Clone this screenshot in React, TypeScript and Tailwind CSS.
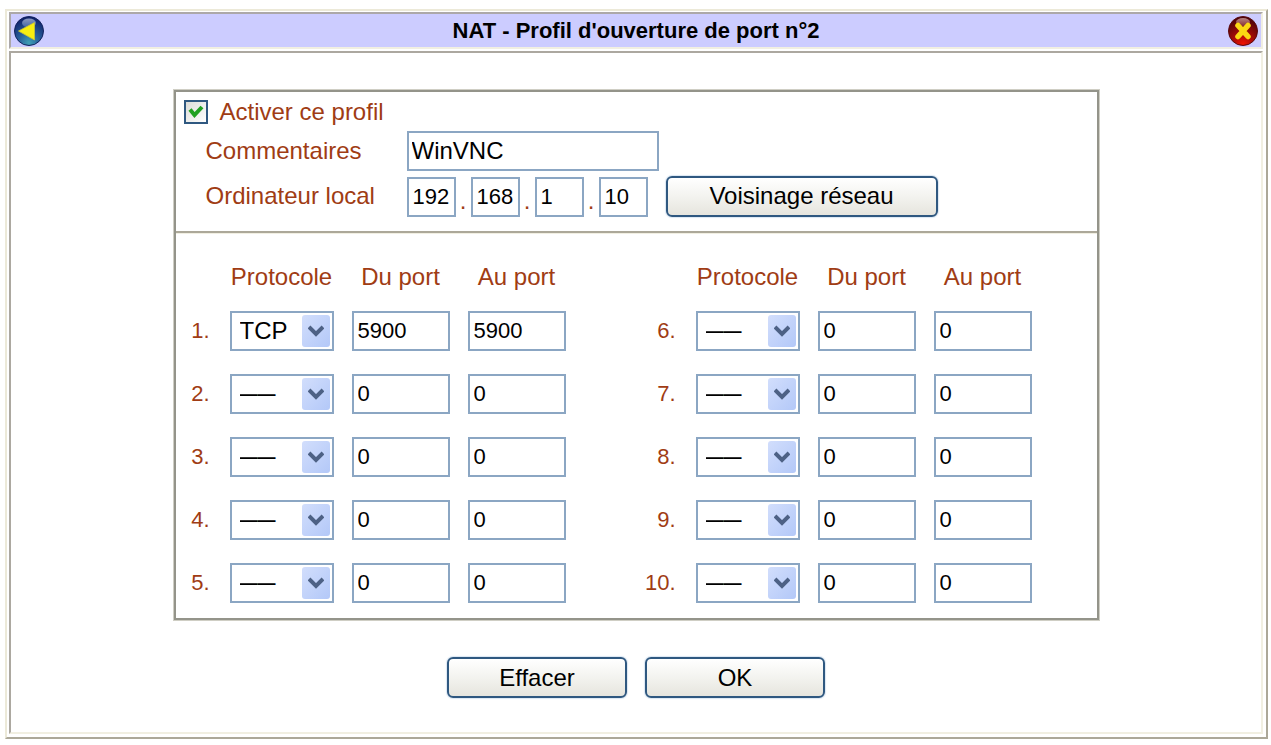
import React, { useState } from "react";

const rules = Array.from({ length: 10 }, (_, index) => ({
  id: index + 1,
  protocol: index === 0 ? "tcp" : "none",
  from: index === 0 ? "5900" : "0",
  to: index === 0 ? "5900" : "0",
}));

const localAddress = ["192", "168", "1", "10"];

const inputClass =
  "block h-[40px] border-2 border-[#8ba6c3] bg-white px-[4px] text-[22px] text-black outline-none";

const buttonClass =
  "h-[41px] rounded-[6px] border-2 border-[#2f5880] bg-linear-to-b from-white via-[#f3f3ef] to-[#e6e5de] text-[24px] leading-[28px] text-black shadow-[0_0_1px_1px_#dbe7f3]";

const BackIcon = () => (
  <svg width="30" height="30" viewBox="0 0 30 30" aria-hidden="true">
    <defs>
      <radialGradient id="blueBall" cx="50%" cy="90%" r="90%">
        <stop offset="0" stopColor="#3fa0b4" />
        <stop offset="0.4" stopColor="#28609a" />
        <stop offset="1" stopColor="#0e1c66" />
      </radialGradient>
      <linearGradient id="blueShine" x1="0" y1="0" x2="0" y2="1">
        <stop offset="0" stopColor="#b4bfdc" />
        <stop offset="1" stopColor="#4a6cab" />
      </linearGradient>
    </defs>
    <circle cx="15" cy="15" r="14.5" fill="url(#blueBall)" stroke="#14245f" />
    <ellipse cx="15" cy="7" rx="7" ry="4.5" fill="url(#blueShine)" opacity="0.75" />
    <path d="M4.5 15 L20.5 6.5 V24 Z" fill="#f8ee10" stroke="#c9c437" strokeWidth="0.8" />
  </svg>
);

const CloseIcon = () => (
  <svg width="30" height="30" viewBox="0 0 30 30" aria-hidden="true">
    <defs>
      <radialGradient id="redBall" cx="50%" cy="95%" r="90%">
        <stop offset="0" stopColor="#f01400" />
        <stop offset="0.4" stopColor="#a80c08" />
        <stop offset="1" stopColor="#4c0408" />
      </radialGradient>
      <linearGradient id="redShine" x1="0" y1="0" x2="0" y2="1">
        <stop offset="0" stopColor="#c99a9a" />
        <stop offset="1" stopColor="#8c3a3a" />
      </linearGradient>
    </defs>
    <circle cx="15" cy="15" r="14.5" fill="url(#redBall)" stroke="#5a0a10" />
    <ellipse cx="15" cy="6" rx="7" ry="4" fill="url(#redShine)" opacity="0.85" />
    <path
      d="M10 9.5 L20 20.5 M20 9.5 L10 20.5"
      stroke="#fbd913"
      strokeWidth="5.5"
      strokeLinecap="round"
    />
  </svg>
);

const ProtocolSelect = ({ id, value }: { id: number; value: string }) => {
  const [protocol, setProtocol] = useState(value);

  return (
    <div className="relative w-[104px]">
      <select
        aria-label={`Protocole ${id}`}
        value={protocol}
        onChange={(e) => setProtocol(e.target.value)}
        className={`block h-[40px] w-full appearance-none border-2 border-[#8ba6c3] bg-white pl-[8px] text-black outline-none ${
          protocol === "none" ? "text-[18px] font-bold" : "text-[24px]"
        }`}
      >
        <option value="none">——</option>
        <option value="tcp">TCP</option>
        <option value="udp">UDP</option>
      </select>
      {/* Drop-down arrow */}
      <span className="pointer-events-none absolute top-[4px] right-[4px] flex h-[32px] w-[28px] items-center justify-center rounded-[3px] bg-linear-to-br from-[#d2defc] to-[#b3c8f8]">
        <svg width="16" height="12" viewBox="0 0 16 12" aria-hidden="true">
          <path d="M1 2 L8 9 L15 2" fill="none" stroke="#4d6185" strokeWidth="4" />
        </svg>
      </span>
    </div>
  );
};

const PortTable = ({ items }: { items: typeof rules }) => (
  <table className="border-collapse">
    <thead>
      <tr className="h-[65px] align-top">
        <td></td>
        <th className="pt-[29px] pl-[18px] text-center font-normal">Protocole</th>
        <th className="pt-[29px] pl-[18px] text-center font-normal">Du port</th>
        <th className="pt-[29px] pl-[18px] text-center font-normal">Au port</th>
      </tr>
    </thead>
    <tbody>
      {items.map((item) => (
        <tr key={item.id} className="h-[63px]">
          <th className="w-[54px] pr-[2px] text-right text-[22px] font-normal">{item.id}.</th>
          <td className="pl-[18px]">
            <ProtocolSelect id={item.id} value={item.protocol} />
          </td>
          <td className="pl-[18px]">
            <input
              type="text"
              aria-label={`Du port ${item.id}`}
              defaultValue={item.from}
              className={`${inputClass} w-[98px]`}
            />
          </td>
          <td className="pl-[18px]">
            <input
              type="text"
              aria-label={`Au port ${item.id}`}
              defaultValue={item.to}
              className={`${inputClass} w-[98px]`}
            />
          </td>
        </tr>
      ))}
    </tbody>
  </table>
);

const App = () => {
  return (
    <div className="min-h-screen bg-white pt-[9px] pr-[3px] pb-[4px] pl-[5px] font-['Liberation_Sans',Arial,sans-serif] text-[24px] leading-[28px] text-[#a03c14]">
      <div className="border-2 border-t-[#ece9d8] border-r-[#aca899] border-b-[#aca899] border-l-[#ece9d8] pt-[1px] pr-[3px] pb-[3px] pl-[2px]">
        {/* Title bar */}
        <header className="flex h-[37px] items-center justify-between border-2 border-t-[#aca8a8] border-r-[#f1efe2] border-b-[#f1efe2] border-l-[#aca8a8] bg-[#ccccff] px-[3px]">
          <button type="button" aria-label="Retour">
            <BackIcon />
          </button>
          <h1 className="text-[22px] font-bold text-black">
            NAT - Profil d'ouverture de port n°2
          </h1>
          <button type="button" aria-label="Fermer">
            <CloseIcon />
          </button>
        </header>

        {/* Profile form */}
        <form
          onSubmit={(e) => e.preventDefault()}
          className="mt-[2px] border-2 border-t-[#aca8a0] border-r-[#f1efe2] border-b-[#f1efe2] border-l-[#aca8a0] px-4 pt-[37px] pb-[34px]"
        >
          <div className="mx-auto w-full max-w-[925px] border-2 border-[#94948a] shadow-[0_0_0_1px_#cfcec4]">
            <div className="border-b-2 border-[#aca899] pt-[4px] pb-[14px] pl-[8px]">
              <div className="mb-[3px] flex h-[32px] items-center">
                <span className="relative flex">
                  <input
                    id="enabled"
                    type="checkbox"
                    defaultChecked
                    className="peer size-[24px] appearance-none border-2 border-[#2f5880] bg-linear-to-br from-[#dcdcd7] to-white"
                  />
                  <svg
                    className="pointer-events-none absolute inset-0 hidden peer-checked:block"
                    width="24"
                    height="24"
                    viewBox="0 0 24 24"
                    aria-hidden="true"
                  >
                    <path d="M6 9.5 L10.5 15 L18 7" fill="none" stroke="#21a121" strokeWidth="4" />
                  </svg>
                </span>
                <label htmlFor="enabled" className="pl-[12px]">
                  Activer ce profil
                </label>
              </div>

              <div className="flex items-center pl-[22px]">
                <label htmlFor="comment" className="w-[201px]">
                  Commentaires
                </label>
                <input
                  id="comment"
                  type="text"
                  defaultValue="WinVNC"
                  className="block h-[40px] w-[252px] border-2 border-[#8ba6c3] bg-white px-[3px] text-[24px] text-black outline-none"
                />
              </div>

              <div className="mt-[4px] flex items-center pl-[22px]">
                <label htmlFor="ip-0" className="w-[201px]">
                  Ordinateur local
                </label>
                <div className="mt-[2px] flex items-end">
                  {localAddress.map((part, index) => (
                    <React.Fragment key={index}>
                      {index !== 0 && <span className="w-[15px] pb-[2px] text-center">.</span>}
                      <input
                        id={`ip-${index}`}
                        type="text"
                        aria-label={`Ordinateur local ${index + 1}`}
                        defaultValue={part}
                        className={`${inputClass} w-[49px]`}
                      />
                    </React.Fragment>
                  ))}
                </div>
                <button type="button" className={`${buttonClass} ml-[18px] w-[272px]`}>
                  Voisinage réseau
                </button>
              </div>
            </div>

            {/* Port ranges */}
            <div className="flex gap-[58px] border-t border-[#f1efe2] pb-[4px]">
              <div className="-ml-[18px]">
                <PortTable items={rules.slice(0, 5)} />
              </div>
              <PortTable items={rules.slice(5)} />
            </div>
          </div>

          <div className="mt-[37px] flex justify-center gap-[18px]">
            <button type="reset" className={`${buttonClass} w-[180px]`}>
              Effacer
            </button>
            <button type="submit" className={`${buttonClass} w-[180px]`}>
              OK
            </button>
          </div>
        </form>
      </div>
    </div>
  );
};

export default App;
